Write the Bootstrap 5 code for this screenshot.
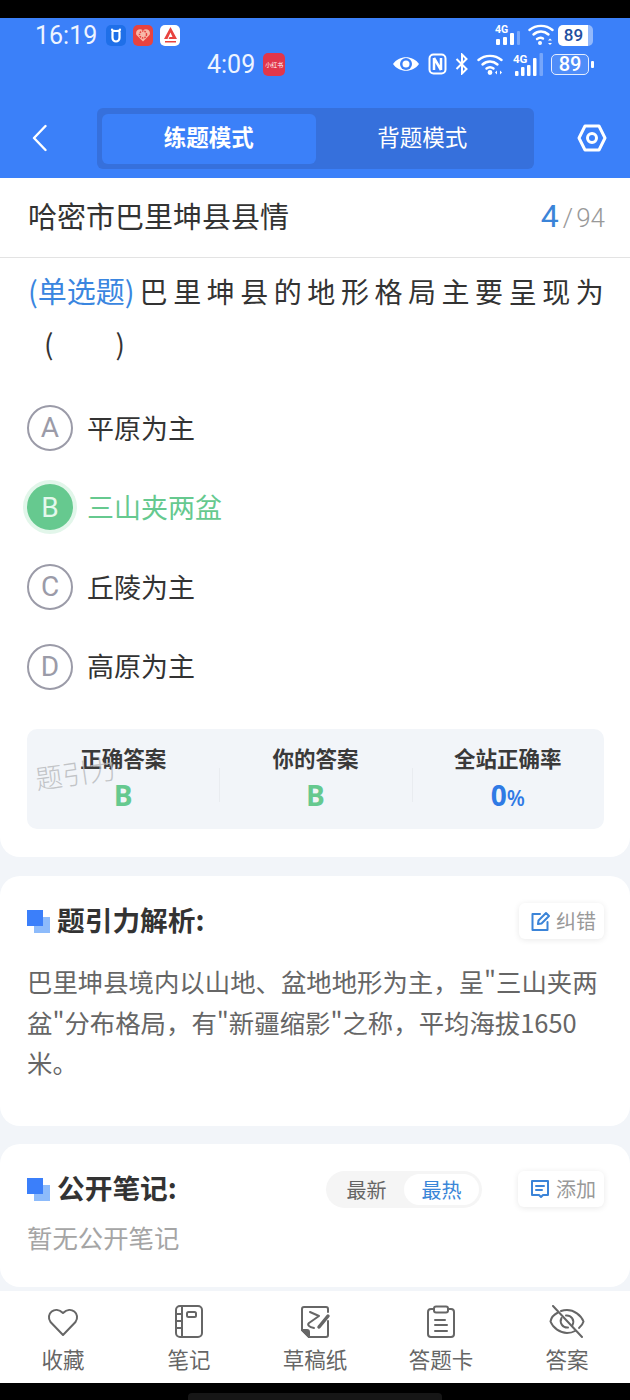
<!DOCTYPE html>
<html lang="zh-CN">
<head>
    <meta charset="UTF-8">
    <meta name="viewport" content="width=device-width, initial-scale=1">
    <title>练题模式</title>
    <link rel="stylesheet" href="https://cdn.jsdelivr.net/npm/bootstrap@5.3.3/dist/css/bootstrap.min.css">
    <style>
        html, body { background: #f2f5f9; }
        body { width: 630px; height: 1400px; overflow: hidden; font-family: "Noto Sans CJK SC", "Noto Sans", sans-serif; color: #333; }
        .blackbar { height: 18px; background: #000; }
        .app-head { height: 160px; background: #3b80f9; color: #fff; }
        .status-one { height: 34px; padding: 0 37px 0 35px; }
        .status-two { height: 42px; margin-top: -9px; padding: 0 36px 0 207px; }
        .clock { font-family: Roboto, sans-serif; font-size: 25px; line-height: 1; color: #eef4ff; }
        .app-ico { width: 20px; height: 21px; border-radius: 5px; display: flex; align-items: center; justify-content: center; }
        .ico-blue { background: #1f6fe8; margin-left: 9px; }
        .ico-red { background: #e8433f; margin-left: 7px; }
        .ico-white { background: #fff; margin-left: 7px; }
        .ico-book { background: #e2364a; width: 22px; height: 23px; font-size: 6px; margin-left: 8px; }
        .batt-solid { width: 35px; height: 21px; background: linear-gradient(90deg, #fff 30px, rgba(255, 255, 255, .45) 30px); border-radius: 5px; color: #1f4f9f; font: 500 17px/21px Roboto, sans-serif; padding-right: 4px; text-align: center; }
        .batt-line { width: 38px; height: 21px; border: 1.5px solid #e4edfe; border-radius: 5px; font: 500 20px/18px Roboto, sans-serif; text-align: center; color: #fff; background: rgba(255, 255, 255, .1); }
        .batt-tip { width: 3px; height: 7px; background: #fff; border-radius: 1px; margin-left: 2px; }
        .head-nav { height: 62px; margin-top: 22px; padding: 0 23px 0 32px; }
        .mode-switch { width: 437px; height: 61px; margin-left: 50px; padding: 6px 5px 5px; background: #3670dc; border-radius: 6px; }
        .mode-item { flex: 1; font-size: 22.5px; padding-bottom: 3px; display: flex; align-items: center; justify-content: center; border-radius: 6px; }
        .mode-item.on { background: #3b80f9; font-weight: 700; }
        .main-card { height: 679px; background: #fff; border-radius: 0 0 20px 20px; position: relative; }
        .title-row { height: 80px; padding: 0 25px 4px 28px; border-bottom: 1px solid #e3e3e3; }
        .title-text { font-size: 29px; color: #333; }
        .page-num { font: 300 26px Roboto, sans-serif; color: #999; }
        .page-num b { font-size: 32px; font-weight: 400; color: #3b84d8; margin-right: 4px; }
        .page-num i { font-style: normal; margin-right: 3px; }
        .question { padding: 6px 0 0 28px; font-size: 28px; line-height: 52px; letter-spacing: 5.55px; color: #333; height: 130px; white-space: nowrap; }
        .question span { color: #3a86e0; letter-spacing: 0; font-size: 29px; margin-right: 5px; }
        .q-paren { display: inline-block; margin-left: 16px; letter-spacing: 0; }
        .q-paren i { display: inline-block; width: 62px; }
        .opt-row { height: 79.6px; padding-left: 27px; font-size: 27px; color: #333; gap: 14px; }
        .opt-mark { width: 46px; height: 46px; border: 2px solid #9b9ba8; border-radius: 50%; color: #9b9ba8; font: 400 28px Roboto, sans-serif; display: flex; align-items: center; justify-content: center; }
        .opt-row.right { color: #66c98f; }
        .opt-row.right .opt-mark { background: #66c98f; color: #e4f8ec; border-color: #66c98f; box-shadow: 0 0 0 4px #e2f6ea; }
        .stat-box { margin: 23px 26px 0 27px; height: 100px; background: #f2f5f9; border-radius: 10px; padding-top: 13px; }
        .stat-col { width: 192.3px; text-align: center; position: relative; }
        .stat-col + .stat-col::before { content: ""; position: absolute; left: 0; top: 26px; height: 34px; border-left: 1px solid #e9ecf0; }
        .stat-head { font-size: 21.5px; font-weight: 700; line-height: 32px; color: #3a3a3a; }
        .stat-val { font: 700 28px/42px "Open Sans", sans-serif; }
        .stat-val small { font-size: 21px; font-weight: 600; }
        .text-ok { color: #66c98f; }
        .text-rate { color: #2f7ae5; }
        .mark-wm { position: absolute; left: 35px; top: 575px; font-size: 27px; font-weight: 300; color: #b9bbbe; transform: rotate(-8deg); opacity: .85; }
        .sec-card { background: #fff; border-radius: 20px; }
        .sec-one { height: 250px; margin-top: 19px; padding: 27px 26px 0 27px; }
        .sec-two { height: 143px; margin-top: 18px; padding: 27px 26px 0 27px; }
        .sec-head { height: 36px; }
        .sec-square { width: 23px; height: 23px; position: relative; margin-right: 7px; flex: none; }
        .sec-square::before { content: ""; position: absolute; right: 0; bottom: 0; width: 16px; height: 16px; background: #8dbbfb; }
        .sec-square::after { content: ""; position: absolute; left: 0; top: 0; width: 16px; height: 16px; background: #3b7ffa; }
        .sec-title { font-size: 27.7px; font-weight: 700; color: #333; line-height: 36px; padding-bottom: 4px; }
        .tool-btn { height: 36px; padding: 0 8px 0 11px; border-radius: 6px; background: #fff; box-shadow: 0 1px 6px rgba(0, 0, 0, .09); font-size: 20px; color: #999; gap: 5px; }
        .sec-text { margin-top: 22px; font-size: 25.4px; line-height: 40.5px; color: #666; }
        .sort-pill { height: 37px; padding: 3px; border-radius: 19px; background: #f5f5f5; font-size: 20px; color: #666; margin-right: 36px; }
        .sort-pill div { width: 75px; text-align: center; line-height: 31px; }
        .sort-pill .on { background: #fff; border-radius: 16px; color: #3a86d8; }
        .sec-empty { margin-top: 12px; font-size: 25.4px; line-height: 36px; color: #a5a5a5; }
        .tabbar { position: absolute; left: 0; right: 0; top: 1291px; height: 92px; background: #fff; }
        .tab-item { width: 126px; text-align: center; font-size: 21.5px; line-height: 28px; color: #666; padding-top: 14px; }
        .tab-item svg { display: block; margin: 0 auto 6px; }
        .blackfoot { position: absolute; left: 0; right: 0; top: 1383px; height: 17px; background: #000; }
        .home-bar { position: absolute; left: 188px; top: 10px; width: 254px; height: 7px; border-radius: 4px 4px 0 0; background: #161616; }
    </style>
</head>
<body class="position-relative">
    <div class="blackbar"></div>
    <header class="app-head">
        <div class="status-one d-flex align-items-center">
            <span class="clock">16:19</span>
            <span class="app-ico ico-blue">
                <svg width="14" height="15" viewBox="0 0 14 15" fill="none" stroke="#fff" stroke-width="2.200" stroke-linecap="round"><path d="M3 1.500c0 2 8 2 8 0M3.500 4v6a3.500 3.500 0 0 0 7 0V4"/></svg>
            </span>
            <span class="app-ico ico-red">
                <svg width="16" height="16" viewBox="0 0 16 16"><path d="M8 14.500 1.500 8C-.500 4 4.500 .5 8 3.500 11.500 .5 16.500 4 14.500 8Z" fill="#f7b9a8"/><circle cx="8" cy="7.500" r="3.500" fill="none" stroke="#e8433f" stroke-width="1.500" stroke-dasharray="1.500 1"/></svg>
            </span>
            <span class="app-ico ico-white">
                <svg width="17" height="18" viewBox="0 0 17 18"><path d="M8.500 1 2 13h3.500l3-6.500L10.500 11H7.500L6.500 13H15Z" fill="#e8433f"/><rect x="3" y="15" width="11" height="1.500" fill="#e8433f"/></svg>
            </span>
            <div class="ms-auto d-flex align-items-center">
                <svg width="27" height="22" viewBox="0 0 27 22" fill="#fff"><text x="2" y="9" font-family="Roboto, sans-serif" font-size="10.500" font-weight="700" fill="#fff">4G</text><rect x="3" y="15" width="4" height="6" rx="1"/><rect x="10" y="13" width="4" height="8" rx="1"/><rect x="17" y="9" width="4" height="12" rx="1"/><rect x="24" y="7" width="3" height="14" rx="1" opacity=".3"/></svg>
                <svg class="ms-2" width="26" height="22" viewBox="0 0 26 22" fill="none" stroke="#fff" stroke-width="2.400" stroke-linecap="round"><path d="M1.500 6C8 .5 18 .5 24.500 6"/><path d="M5.500 10.500C10 6.500 16 6.500 20.500 10.500"/><path d="M9 15C11 13.500 13.500 13.500 15 14.500"/><circle cx="12" cy="19" r=".8" fill="#fff"/><path d="M22 14.500l-2 2h4ZM22 21l-2-2h4Z" fill="#fff" stroke="none"/></svg>
                <span class="batt-solid ms-1">89</span>
            </div>
        </div>
        <div class="status-two d-flex align-items-center">
            <span class="clock">4:09</span>
            <span class="app-ico ico-book">小红书</span>
            <div class="ms-auto d-flex align-items-center">
                <svg width="28" height="20" viewBox="0 0 28 20"><path d="M1 10C7 1 21 1 27 10 21 19 7 19 1 10Z" fill="#fff"/><circle cx="14" cy="10" r="6" fill="#3b80f9"/><circle cx="14" cy="10" r="3.500" fill="#fff"/></svg>
                <svg class="ms-2" width="19" height="22" viewBox="0 0 19 22" fill="none" stroke="#fff" stroke-width="2"><rect x="1.500" y="1.500" width="16" height="19" rx="4"/><path d="M6 5v12M13 5v12M6 5l7 12" stroke-width="2.500"/></svg>
                <svg class="ms-2" width="14" height="22" viewBox="0 0 14 22" fill="none" stroke="#fff" stroke-width="2"><path d="M1.500 6l10 10-4.500 4.500V1.500L11.500 6 1.500 16"/></svg>
                <svg class="ms-2" width="27" height="22" viewBox="0 0 27 22" fill="none" stroke="#fff" stroke-width="2.400" stroke-linecap="round"><path d="M1.500 7C8 1.500 18 1.500 24.500 7"/><path d="M5.500 11.500C10 7.500 16 7.500 20.500 11.500"/><path d="M9.500 15.500C11.500 14 14.500 14 16.500 15.500"/><circle cx="13" cy="19.500" r="1.200" fill="#fff"/><path d="M20 17.500l-2 2 2 2ZM23 17.500l2 2-2 2Z" fill="#fff" stroke="none"/></svg>
                <svg class="ms-2" width="31" height="24" viewBox="0 0 31 24" fill="#fff"><text x="1" y="11" font-family="Roboto, sans-serif" font-size="11.500" font-weight="700" fill="#fff">4G</text><rect x="3" y="19" width="3.500" height="5" rx="1"/><rect x="9" y="15" width="3.500" height="9" rx="1"/><rect x="15" y="13" width="3.500" height="11" rx="1"/><rect x="21" y="6" width="3.500" height="18" rx="1"/><rect x="27.500" y="1" width="3.500" height="23" rx="1" opacity=".3"/></svg>
                <div class="d-flex align-items-center ms-2"><span class="batt-line">89</span><span class="batt-tip"></span></div>
            </div>
        </div>
        <div class="head-nav d-flex align-items-center">
            <svg width="15" height="28" viewBox="0 0 15 28" fill="none" stroke="#fff" stroke-width="2.400" stroke-linecap="round" stroke-linejoin="round"><path d="M13.500 2 2 14l11.500 12"/></svg>
            <div class="mode-switch d-flex">
                <div class="mode-item on">练题模式</div>
                <div class="mode-item">背题模式</div>
            </div>
            <svg class="ms-auto" width="30" height="28" viewBox="0 0 30 28" fill="none" stroke="#fff" stroke-width="3" stroke-linejoin="round"><path d="M8 2h14l6 12-6 12H8L2 14Z"/><circle cx="15" cy="14" r="4.500"/></svg>
        </div>
    </header>

    <section class="main-card">
        <div class="title-row d-flex align-items-center justify-content-between">
            <div class="title-text">哈密市巴里坤县县情</div>
            <div class="page-num"><b>4</b><i>/</i>94</div>
        </div>
        <div class="question"><span>(单选题)</span>巴里坤县的地形格局主要呈现为<br><div class="q-paren">(<i></i>)</div></div>
        <div class="opt-row d-flex align-items-center"><div class="opt-mark">A</div>平原为主</div>
        <div class="opt-row right d-flex align-items-center"><div class="opt-mark">B</div>三山夹两盆</div>
        <div class="opt-row d-flex align-items-center"><div class="opt-mark">C</div>丘陵为主</div>
        <div class="opt-row d-flex align-items-center"><div class="opt-mark">D</div>高原为主</div>
        <div class="stat-box d-flex">
            <div class="stat-col"><div class="stat-head">正确答案</div><div class="stat-val text-ok">B</div></div>
            <div class="stat-col"><div class="stat-head">你的答案</div><div class="stat-val text-ok">B</div></div>
            <div class="stat-col"><div class="stat-head">全站正确率</div><div class="stat-val text-rate">0<small>%</small></div></div>
        </div>
        <div class="mark-wm">题引力</div>
    </section>

    <section class="sec-card sec-one">
        <div class="sec-head d-flex align-items-center">
            <span class="sec-square"></span>
            <span class="sec-title">题引力解析:</span>
            <div class="tool-btn ms-auto d-flex align-items-center">
                <svg width="21" height="21" viewBox="0 0 21 21" fill="none" stroke="#3b84d8" stroke-width="2" stroke-linecap="round" stroke-linejoin="round"><path d="M10 3H2.500v16h15v-8"/><path d="M8.500 9.500 16 2l3 3-7.500 7.500-3.500.5Z"/></svg>
                纠错
            </div>
        </div>
        <div class="sec-text">巴里坤县境内以山地、盆地地形为主，呈"三山夹两盆"分布格局，有"新疆缩影"之称，平均海拔1650米。</div>
    </section>

    <section class="sec-card sec-two">
        <div class="sec-head d-flex align-items-center">
            <span class="sec-square"></span>
            <span class="sec-title">公开笔记:</span>
            <div class="sort-pill d-flex ms-auto">
                <div>最新</div>
                <div class="on">最热</div>
            </div>
            <div class="tool-btn d-flex align-items-center">
                <svg width="22" height="22" viewBox="0 0 22 22" fill="none" stroke="#3b84d8" stroke-width="2" stroke-linecap="round" stroke-linejoin="round"><path d="M3 3h16v14h-5l-2 2-2-2H3Z"/><path d="M7 8h8M7 12h6"/></svg>
                添加
            </div>
        </div>
        <div class="sec-empty">暂无公开笔记</div>
    </section>

    <nav class="tabbar d-flex">
        <div class="tab-item">
            <svg width="34" height="34" viewBox="0 0 34 34" fill="none" stroke="#666" stroke-width="2" stroke-linejoin="round"><path d="M17 30 4.500 17C-1 9 9 0 17 8c8-8 18 1 12.500 9Z"/></svg>
            收藏
        </div>
        <div class="tab-item">
            <svg width="34" height="34" viewBox="0 0 34 34" fill="none" stroke="#666" stroke-width="2" stroke-linejoin="round"><rect x="4" y="1" width="26" height="31" rx="4"/><path d="M10 1v31M4 9h6M4 16h6M4 23h6"/><rect x="15" y="7" width="9" height="5" rx="1.500"/></svg>
            笔记
        </div>
        <div class="tab-item">
            <svg width="34" height="34" viewBox="0 0 34 34" fill="none" stroke="#666" stroke-width="2" stroke-linecap="round" stroke-linejoin="round"><path d="M30 16v14a2 2 0 0 1-2 2H11L4 25V4a2 2 0 0 1 2-2h22a2 2 0 0 1 2 2v3"/><path d="M4 25h5a2 2 0 0 1 2 2v5Z" fill="#666"/><path d="M12 7l9 4-10 7c-2 2 0 4 5 5"/><path d="M21 22l9-11" stroke-width="3.500"/></svg>
            草稿纸
        </div>
        <div class="tab-item">
            <svg width="34" height="34" viewBox="0 0 34 34" fill="none" stroke="#666" stroke-width="2" stroke-linecap="round" stroke-linejoin="round"><path d="M10 4H7a3 3 0 0 0-3 3v22a3 3 0 0 0 3 3h20a3 3 0 0 0 3-3V7a3 3 0 0 0-3-3h-3"/><rect x="10" y="1.500" width="14" height="6" rx="2"/><path d="M11 15h10M11 20h12M11 26h12"/></svg>
            答题卡
        </div>
        <div class="tab-item">
            <svg width="36" height="34" viewBox="0 0 36 34" fill="none" stroke="#666" stroke-width="2" stroke-linecap="round"><path d="M9 7.500C5 9.500 2 13 1.500 16.500 4 23 11 28 18 28c3 0 6-.8 8-2M30 23c2.500-2 4-4.500 4.500-6.500C32 10 25 5 18 5c-2 0-4 .3-6 1"/><path d="M4 1l29 31"/><path d="M12.500 13c-2.500 5 1.500 10 6.500 9.500M23.500 20c2.500-5-1.500-10-6.500-9.500"/></svg>
            答案
        </div>
    </nav>
    <div class="blackfoot"><div class="home-bar"></div></div>
    <script src="https://cdn.jsdelivr.net/npm/bootstrap@5.3.3/dist/js/bootstrap.bundle.min.js"></script>
</body>
</html>
